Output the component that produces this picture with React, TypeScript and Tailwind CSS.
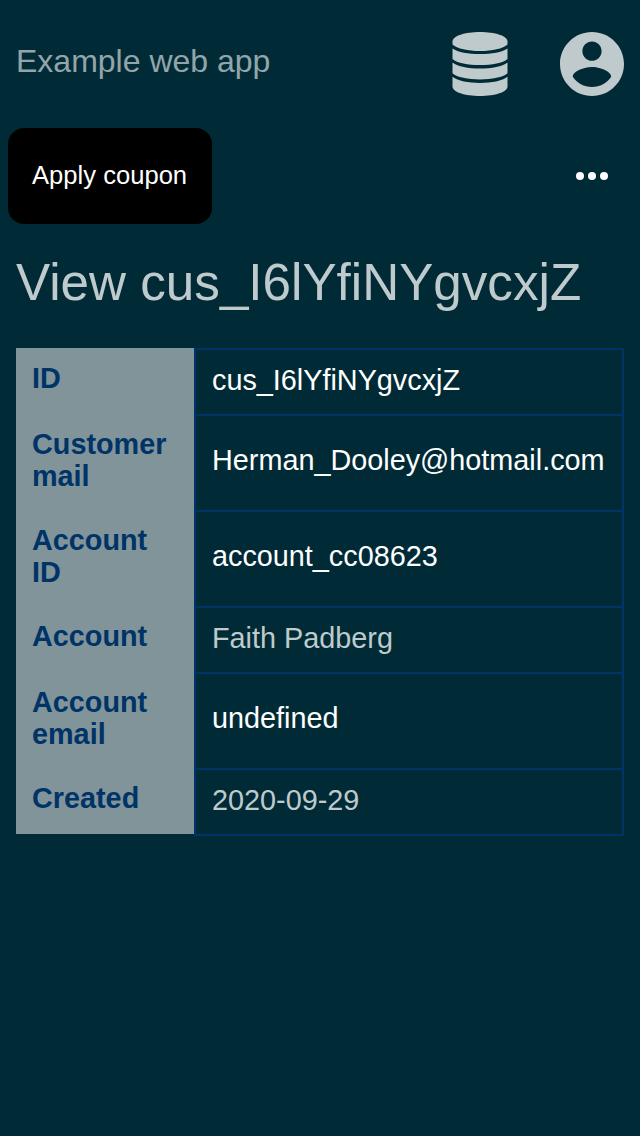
const rows = [
  { label: "ID", value: "cus_I6lYfiNYgvcxjZ", strong: true, h: "h-[66px]", pad: "pb-1" },
  { label: "Customer mail", value: "Herman_Dooley@hotmail.com", strong: true, h: "h-[96px]", pad: "pb-1.5" },
  { label: "Account ID", value: "account_cc08623", strong: true, h: "h-[96px]", pad: "pb-1.5" },
  { label: "Account", value: "Faith Padberg", strong: false, h: "h-[66px]", pad: "pb-1" },
  { label: "Account email", value: "undefined", strong: true, h: "h-[96px]", pad: "pb-1.5" },
  { label: "Created", value: "2020-09-29", strong: false, h: "h-[66px]", pad: "pb-1" },
];

function DatabaseIcon() {
  return (
    <svg className="h-16 w-14" viewBox="0 0 56 64" fill="currentColor" aria-hidden="true">
      <path d="M28 0C43 0 55.5 4 55.5 9.5V12.5C51 16.8 40 19 28 19S5 16.8 .5 12.5V9.5C.5 4 13 0 28 0Z" />
      <path d="M.5 16.5C6 20.3 16 22 28 22S50 20.3 55.5 16.5V27C51 31 40 33 28 33S5 31 .5 27Z" />
      <path d="M.5 30.5C6 34.6 16 36.5 28 36.5S50 34.6 55.5 30.5V41.3C51 45.3 40 47.5 28 47.5S5 45.3 .5 41.3Z" />
      <path d="M.5 44.8C6 49 16 51 28 51S50 49 55.5 44.8V54.5C55.5 60 43 64 28 64S.5 60 .5 54.5Z" />
    </svg>
  );
}

function AccountIcon() {
  return (
    <svg className="size-16" viewBox="2 2 20 20" fill="currentColor" aria-hidden="true">
      <path d="M12 2C6.48 2 2 6.48 2 12s4.48 10 10 10 10-4.48 10-10S17.52 2 12 2zm0 3c1.66 0 3 1.34 3 3s-1.34 3-3 3-3-1.34-3-3 1.34-3 3-3zm0 14.2c-2.5 0-4.71-1.28-6-3.22.03-1.99 4-3.08 6-3.08 1.99 0 5.97 1.09 6 3.08-1.29 1.94-3.5 3.22-6 3.22z" />
    </svg>
  );
}

export default function App() {
  return (
    <main className="min-h-screen bg-[#002b36] font-['Liberation_Sans',Arial,sans-serif] text-[#bfcacd]">
      <header className="flex h-32 items-center justify-between px-4">
        <span className="pb-1.5 text-[32px] leading-9 text-[#93a5aa]">Example web app</span>
        <nav className="flex gap-[52px]">
          <button aria-label="Data"><DatabaseIcon /></button>
          <button aria-label="Account"><AccountIcon /></button>
        </nav>
      </header>
      <div className="flex h-24 items-center justify-between pr-8 pl-2">
        <button className="h-24 w-[204px] rounded-2xl bg-black px-6 pb-0.5 text-left text-[25.6px] leading-8 whitespace-nowrap text-white">
          Apply coupon
        </button>
        <button aria-label="More" className="flex gap-1">
          <span className="size-2 rounded-full bg-white" />
          <span className="size-2 rounded-full bg-white" />
          <span className="size-2 rounded-full bg-white" />
        </button>
      </div>
      <h1 className="mt-[29px] px-4 text-[51.2px] leading-[60px]">View cus_I6lYfiNYgvcxjZ</h1>
      <dl className="mx-4 mt-[35px] text-[28.8px] leading-8">
        {rows.map((row) => (
          <div key={row.label} className={`flex ${row.h}`}>
            <dt className="w-[178px] bg-[#80949a] px-4 pt-[14px] font-bold text-[#003366]">{row.label}</dt>
            <dd className={`-mb-0.5 flex flex-1 items-center border-2 border-[#003366] pl-4 ${row.pad} ${row.strong ? "text-white" : ""}`}>
              {row.value}
            </dd>
          </div>
        ))}
      </dl>
    </main>
  );
}
